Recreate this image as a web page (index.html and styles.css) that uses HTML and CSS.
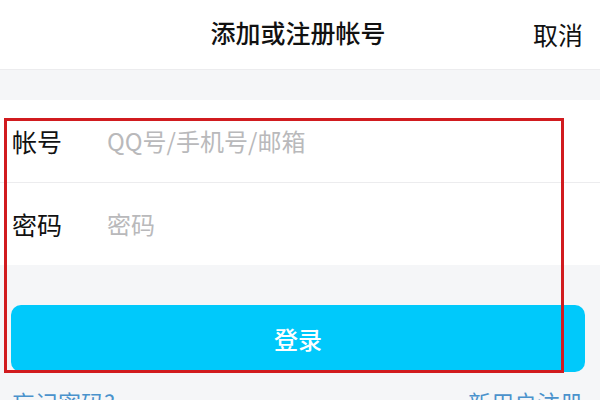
FILE: index.html
```html
<!DOCTYPE html>
<html lang="zh-CN">
<head>
<meta charset="utf-8">
<title>添加或注册帐号</title>
<link rel="stylesheet" href="styles.css">
</head>
<body>
<div class="page">
  <header class="topbar">
    <div class="title">添加或注册帐号</div>
    <div class="cancel">取消</div>
  </header>
  <section class="form">
    <div class="row">
      <span class="label">帐号</span>
      <span class="placeholder">QQ号/手机号/邮箱</span>
    </div>
    <div class="row">
      <span class="label">密码</span>
      <span class="placeholder">密码</span>
    </div>
  </section>
  <div class="btn">登录</div>
  <div class="links">
    <span>忘记密码?</span>
    <span>新用户注册</span>
  </div>
  <div class="mark"></div>
</div>
</body>
</html>
```
FILE: styles.css
```css
html, body {
  margin: 0;
  padding: 0;
  background: #f5f6f8;
  font-family: "Noto Sans CJK SC", "Noto Sans", sans-serif;
}
.page {
  position: relative;
  width: 600px;
  height: 400px;
  overflow: hidden;
}
.topbar {
  position: relative;
  height: 69px;
  background: #ffffff;
  border-bottom: 1px solid #ececee;
  display: flex;
  align-items: center;
  justify-content: center;
}
.title {
  font-size: 25px;
  font-weight: 500;
  color: #111111;
  line-height: 1;
  margin-top: -4px;
  margin-left: -4px;
}
.cancel {
  position: absolute;
  right: 17px;
  top: 22px;
  font-size: 25px;
  line-height: 1;
  color: #111111;
}
.form {
  margin-top: 30px;
  background: #ffffff;
}
.row {
  height: 82px;
  display: flex;
  align-items: center;
  padding-left: 12px;
  border-bottom: 1px solid #ececee;
}
.row:last-child {
  border-bottom: none;
}
.label {
  width: 95px;
  font-size: 25px;
  color: #111111;
  line-height: 1;
}
.placeholder {
  font-size: 24px;
  color: #b9b9bb;
  line-height: 1;
}
.btn {
  margin: 40px 15px 0 11px;
  height: 67px;
  border-radius: 10px;
  background: #00c9fb;
  color: #ffffff;
  font-size: 24px;
  font-weight: 500;
  display: flex;
  align-items: center;
  justify-content: center;
}
.links {
  display: flex;
  justify-content: space-between;
  margin-top: 14px;
  padding: 0 17px 0 12px;
  font-size: 23px;
  line-height: 32px;
  color: #4a92cc;
}
.mark {
  position: absolute;
  left: 4px;
  top: 118px;
  width: 554px;
  height: 249px;
  border: 3px solid #d11b1f;
}
```
